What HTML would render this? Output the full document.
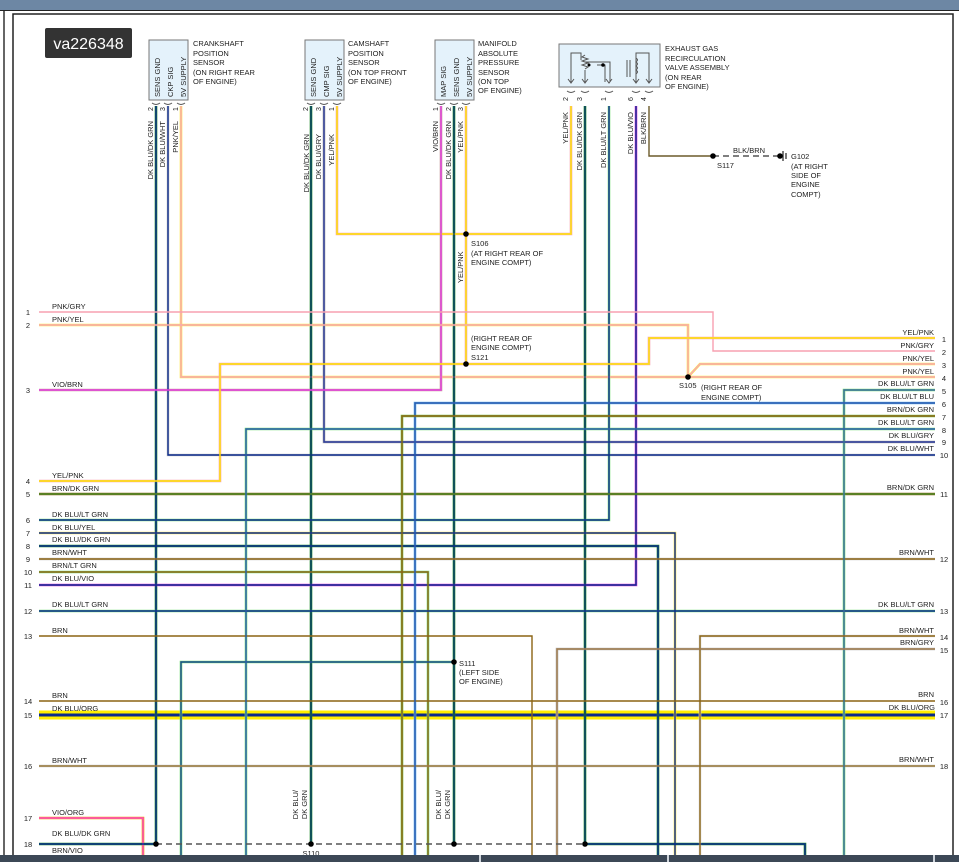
<!DOCTYPE html>
<html><head><meta charset="utf-8"><style>
html,body{margin:0;padding:0;background:#fff;}
svg{display:block;font-family:"Liberation Sans",sans-serif;}
text{fill:#222;}
</style></head><body>
<svg width="959" height="862" viewBox="0 0 959 862" xmlns="http://www.w3.org/2000/svg">
<rect width="959" height="862" fill="#fff"/>
<rect x="0" y="0" width="959" height="10" fill="#6d87a4"/>
<line x1="0" y1="10.5" x2="959" y2="10.5" stroke="#222" stroke-width="1"/>
<line x1="4" y1="11" x2="4" y2="862" stroke="#333" stroke-width="1.5"/>
<rect x="13" y="14" width="940" height="850" fill="none" stroke="#222" stroke-width="1.5"/>

<rect x="45" y="28" width="87" height="30" rx="2" fill="#333"/>
<text x="88.5" y="49" font-size="16" text-anchor="middle" style="fill:#fff">va226348</text>

<g fill="none" stroke-linejoin="miter">
<path d="M39 715H935" stroke="#ffee00" stroke-width="9"/>
<path d="M39 715H935" stroke="#0a2a8c" stroke-width="3"/>

<g stroke-width="2.6">
<path d="M156 106V844" stroke="#1e8a2a"/>
<path d="M168 106V455H935" stroke="#ccc"/>
<path d="M181 106V377H688" stroke="#ffe94a"/>
<path d="M311 106V844" stroke="#1e8a2a"/>
<path d="M324 106V442H935" stroke="#aaa"/>
<path d="M337 106V234H571V106M466 106V364" stroke="#f7a6b3"/>
<path d="M441 106V390H39" stroke="#c9a0a0"/>
<path d="M454 106V844" stroke="#1e8a2a"/>
<path d="M585 106V844" stroke="#1e8a2a"/>
<path d="M609 106V520H39" stroke="#7de07d"/>
<path d="M636 106V585H39" stroke="#e040e0"/>
<path d="M39 325H688V377H935M688 377L700 364H935" stroke="#ffe94a"/>
<path d="M39 481H220V364H649V338H935" stroke="#f7a6b3"/>
<path d="M39 494H935" stroke="#8b6414"/>
<path d="M39 533H675V856" stroke="#ffe94a"/>
<path d="M39 546H658V856" stroke="#1e8a2a"/>
<path d="M39 559H935" stroke="#ccc"/>
<path d="M39 572H428V856" stroke="#7de07d"/>
<path d="M39 611H935" stroke="#7de07d"/>
<path d="M181 856V662H454" stroke="#7de07d"/>
<path d="M39 766H935" stroke="#ccc"/>
<path d="M39 818H143V856" stroke="#f0a000"/>
<path d="M39 844H156M585 844H805V856" stroke="#1e8a2a"/>
<path d="M935 390H844V856" stroke="#7de07d"/>
<path d="M935 403H415V856" stroke="#6ab4f0"/>
<path d="M935 416H402V856" stroke="#7ac04a"/>
<path d="M935 429H246V856" stroke="#7de07d"/>
<path d="M935 636H700V856" stroke="#ddd"/>
<path d="M935 649H557V856" stroke="#bbb"/>
</g>
<g stroke-width="1.4">
<path d="M156 106V844" stroke="#0a2a8c"/>
<path d="M168 106V455H935" stroke="#0a2a8c"/>
<path d="M181 106V377H688" stroke="#f7a6b3"/>
<path d="M311 106V844" stroke="#0a3a6c"/>
<path d="M324 106V442H935" stroke="#2a3a9c"/>
<path d="M337 106V234H571V106M466 106V364" stroke="#ffe600"/>
<path d="M441 106V390H39" stroke="#e53be0"/>
<path d="M454 106V844" stroke="#0a3a6c"/>
<path d="M585 106V844" stroke="#0a3a6c"/>
<path d="M609 106V520H39" stroke="#0a2a8c"/>
<path d="M636 106V585H39" stroke="#0a2a8c"/>
<path d="M649 106V156H713" stroke="#6b5a2a"/>
<path d="M39 312H713V351H935" stroke="#f7a0b0"/>
<path d="M39 325H688V377H935M688 377L700 364H935" stroke="#f7a6b3"/>
<path d="M39 481H220V364H649V338H935" stroke="#ffe600"/>
<path d="M39 494H935" stroke="#4a8a2a"/>
<path d="M39 533H675V856" stroke="#0a2a8c"/>
<path d="M39 546H658V856" stroke="#0a2a8c"/>
<path d="M39 559H935" stroke="#8b6414"/>
<path d="M39 572H428V856" stroke="#8b6414"/>
<path d="M39 611H935" stroke="#0a2a8c"/>
<path d="M39 636H532V856" stroke="#8b6414"/>
<path d="M181 856V662H454" stroke="#1a4a8c"/>
<path d="M39 701H935" stroke="#8b6414"/>
<path d="M39 766H935" stroke="#9a7a3a"/>
<path d="M39 818H143V856" stroke="#ff44cc"/>
<path d="M39 844H156M585 844H805V856" stroke="#0a2a8c"/>
<path d="M935 390H844V856" stroke="#3a6a9c"/>
<path d="M935 403H415V856" stroke="#2a5aac"/>
<path d="M935 416H402V856" stroke="#8b6414"/>
<path d="M935 429H246V856" stroke="#2a5aac"/>
<path d="M935 636H700V856" stroke="#8b6414"/>
<path d="M935 649H557V856" stroke="#a07a4a"/>
</g>
<path d="M156 844H585" stroke="#555" stroke-width="1.5" stroke-dasharray="6 4"/>
<path d="M713 156H780" stroke="#555" stroke-width="1.5" stroke-dasharray="6 4"/>
</g>

<g fill="#000">
<circle cx="466" cy="234" r="2.8"/><circle cx="466" cy="364" r="2.8"/>
<circle cx="688" cy="377" r="2.8"/><circle cx="454" cy="662" r="2.8"/>
<circle cx="713" cy="156" r="2.8"/><circle cx="780" cy="156" r="2.8"/>
<circle cx="156" cy="844" r="2.8"/><circle cx="311" cy="844" r="2.8"/>
<circle cx="454" cy="844" r="2.8"/><circle cx="585" cy="844" r="2.8"/>
</g>
<path d="M783 151V161M786 153V159" stroke="#222" stroke-width="1.2"/>

<g fill="#e4f2fb" stroke="#777" stroke-width="1">
<rect x="149" y="40" width="39" height="60"/>
<rect x="305" y="40" width="39" height="60"/>
<rect x="435" y="40" width="39" height="60"/>
<rect x="559" y="44" width="101" height="43"/>
</g>
<g stroke="#555" stroke-width="1" fill="none">
<path d="M152 103q4 3 8 0M164 103q4 3 8 0M177 103q4 3 8 0"/>
<path d="M307 103q4 3 8 0M320 103q4 3 8 0M333 103q4 3 8 0"/>
<path d="M437 103q4 3 8 0M450 103q4 3 8 0M462 103q4 3 8 0"/>
<path d="M567 91q4 3 8 0M581 91q4 3 8 0M605 91q4 3 8 0M632 91q4 3 8 0M645 91q4 3 8 0"/>
<path d="M571 82V53H581V60M585 82V70M605 82V65H597M636 82V53H649V82"/>
<path d="M585 55l-3 2 6 2-6 2 6 2-6 2 6 2-3 2M585 62H610V82"/>
<path d="M627 60V77M630 60V77M636 58q3 2 0 4q3 2 0 4q3 2 0 4q3 2 0 4"/>
<path d="M568 79l3 4 3-4M582 79l3 4 3-4M606 79l3 4 3-4M633 79l3 4 3-4M646 79l3 4 3-4"/>
</g>
<circle cx="603" cy="65" r="1.8" fill="#000"/><circle cx="589" cy="65" r="1.5" fill="#000"/>

<g font-size="7.5">
<g text-anchor="start">
<text transform="translate(160,97) rotate(-90)">SENS GND</text>
<text transform="translate(173,97) rotate(-90)">CKP SIG</text>
<text transform="translate(186,97) rotate(-90)">5V SUPPLY</text>
<text transform="translate(316,97) rotate(-90)">SENS GND</text>
<text transform="translate(329,97) rotate(-90)">CMP SIG</text>
<text transform="translate(342,97) rotate(-90)">5V SUPPLY</text>
<text transform="translate(446,97) rotate(-90)">MAP SIG</text>
<text transform="translate(459,97) rotate(-90)">SENS GND</text>
<text transform="translate(472,97) rotate(-90)">5V SUPPLY</text>
</g>
<g font-size="7">
<text transform="translate(153,111) rotate(-90)">2</text><text transform="translate(165,111) rotate(-90)">3</text><text transform="translate(178,111) rotate(-90)">1</text>
<text transform="translate(308,111) rotate(-90)">2</text><text transform="translate(321,111) rotate(-90)">3</text><text transform="translate(334,111) rotate(-90)">1</text>
<text transform="translate(438,111) rotate(-90)">1</text><text transform="translate(451,111) rotate(-90)">2</text><text transform="translate(463,111) rotate(-90)">3</text>
<text transform="translate(568,101) rotate(-90)">2</text><text transform="translate(582,101) rotate(-90)">3</text><text transform="translate(606,101) rotate(-90)">1</text><text transform="translate(633,101) rotate(-90)">6</text><text transform="translate(646,101) rotate(-90)">4</text>
</g>
<g text-anchor="end">
<text transform="translate(153,121) rotate(-90)">DK BLU/DK GRN</text>
<text transform="translate(165,121) rotate(-90)">DK BLU/WHT</text>
<text transform="translate(178,121) rotate(-90)">PNK/YEL</text>
<text transform="translate(309,134) rotate(-90)">DK BLU/DK GRN</text>
<text transform="translate(321,134) rotate(-90)">DK BLU/GRY</text>
<text transform="translate(334,134) rotate(-90)">YEL/PNK</text>
<text transform="translate(438,121) rotate(-90)">VIO/BRN</text>
<text transform="translate(451,121) rotate(-90)">DK BLU/DK GRN</text>
<text transform="translate(463,121) rotate(-90)">YEL/PNK</text>
<text transform="translate(568,112) rotate(-90)">YEL/PNK</text>
<text transform="translate(582,112) rotate(-90)">DK BLU/DK GRN</text>
<text transform="translate(606,112) rotate(-90)">DK BLU/LT GRN</text>
<text transform="translate(633,112) rotate(-90)">DK BLU/VIO</text>
<text transform="translate(646,112) rotate(-90)">BLK/BRN</text>
<text transform="translate(298,790) rotate(-90)">DK BLU/</text>
<text transform="translate(307,790) rotate(-90)">DK GRN</text>
<text transform="translate(441,790) rotate(-90)">DK BLU/</text>
<text transform="translate(450,790) rotate(-90)">DK GRN</text>
</g>
<text transform="translate(463,283) rotate(-90)">YEL/PNK</text>

<g>
<text x="193" y="46">CRANKSHAFT</text><text x="193" y="56">POSITION</text><text x="193" y="65">SENSOR</text><text x="193" y="75">(ON RIGHT REAR</text><text x="193" y="84">OF ENGINE)</text>
<text x="348" y="46">CAMSHAFT</text><text x="348" y="56">POSITION</text><text x="348" y="65">SENSOR</text><text x="348" y="75">(ON TOP FRONT</text><text x="348" y="84">OF ENGINE)</text>
<text x="478" y="46">MANIFOLD</text><text x="478" y="56">ABSOLUTE</text><text x="478" y="65">PRESSURE</text><text x="478" y="75">SENSOR</text><text x="478" y="84">(ON TOP</text><text x="478" y="93">OF ENGINE)</text>
<text x="665" y="51">EXHAUST GAS</text><text x="665" y="61">RECIRCULATION</text><text x="665" y="70">VALVE ASSEMBLY</text><text x="665" y="80">(ON REAR</text><text x="665" y="89">OF ENGINE)</text>
<text x="733" y="153">BLK/BRN</text><text x="717" y="168">S117</text>
<text x="791" y="159">G102</text><text x="791" y="169">(AT RIGHT</text><text x="791" y="178">SIDE OF</text><text x="791" y="187">ENGINE</text><text x="791" y="197">COMPT)</text>
<text x="471" y="246">S106</text><text x="471" y="256">(AT RIGHT REAR OF</text><text x="471" y="265">ENGINE COMPT)</text>
<text x="471" y="341">(RIGHT REAR OF</text><text x="471" y="350">ENGINE COMPT)</text><text x="471" y="360">S121</text>
<text x="679" y="388">S105</text><text x="701" y="390">(RIGHT REAR OF</text><text x="701" y="400">ENGINE COMPT)</text>
<text x="459" y="666">S111</text><text x="459" y="675">(LEFT SIDE</text><text x="459" y="684">OF ENGINE)</text>
<text x="311" y="856" text-anchor="middle">S110</text>
</g>

<g>
<text x="52" y="309">PNK/GRY</text><text x="52" y="322">PNK/YEL</text><text x="52" y="387">VIO/BRN</text>
<text x="52" y="478">YEL/PNK</text><text x="52" y="491">BRN/DK GRN</text><text x="52" y="517">DK BLU/LT GRN</text>
<text x="52" y="530">DK BLU/YEL</text><text x="52" y="542">DK BLU/DK GRN</text><text x="52" y="555">BRN/WHT</text>
<text x="52" y="568">BRN/LT GRN</text><text x="52" y="581">DK BLU/VIO</text><text x="52" y="607">DK BLU/LT GRN</text>
<text x="52" y="633">BRN</text><text x="52" y="698">BRN</text><text x="52" y="711">DK BLU/ORG</text>
<text x="52" y="763">BRN/WHT</text><text x="52" y="815">VIO/ORG</text><text x="52" y="836">DK BLU/DK GRN</text><text x="52" y="853">BRN/VIO</text>
</g>
<g text-anchor="middle">
<text x="28" y="315">1</text><text x="28" y="328">2</text><text x="28" y="393">3</text><text x="28" y="484">4</text><text x="28" y="497">5</text>
<text x="28" y="523">6</text><text x="28" y="536">7</text><text x="28" y="549">8</text><text x="28" y="562">9</text><text x="28" y="575">10</text>
<text x="28" y="588">11</text><text x="28" y="614">12</text><text x="28" y="639">13</text><text x="28" y="704">14</text><text x="28" y="718">15</text>
<text x="28" y="769">16</text><text x="28" y="821">17</text><text x="28" y="847">18</text>
</g>
<g text-anchor="end">
<text x="934" y="335">YEL/PNK</text><text x="934" y="348">PNK/GRY</text><text x="934" y="361">PNK/YEL</text><text x="934" y="374">PNK/YEL</text>
<text x="934" y="386">DK BLU/LT GRN</text><text x="934" y="399">DK BLU/LT BLU</text><text x="934" y="412">BRN/DK GRN</text>
<text x="934" y="425">DK BLU/LT GRN</text><text x="934" y="438">DK BLU/GRY</text><text x="934" y="451">DK BLU/WHT</text>
<text x="934" y="490">BRN/DK GRN</text><text x="934" y="555">BRN/WHT</text><text x="934" y="607">DK BLU/LT GRN</text>
<text x="934" y="633">BRN/WHT</text><text x="934" y="645">BRN/GRY</text><text x="934" y="697">BRN</text>
<text x="935" y="710">DK BLU/ORG</text><text x="934" y="762">BRN/WHT</text>
</g>
<g text-anchor="middle">
<text x="944" y="342">1</text><text x="944" y="355">2</text><text x="944" y="368">3</text><text x="944" y="381">4</text>
<text x="944" y="394">5</text><text x="944" y="407">6</text><text x="944" y="420">7</text><text x="944" y="433">8</text>
<text x="944" y="445">9</text><text x="944" y="458">10</text><text x="944" y="497">11</text><text x="944" y="562">12</text>
<text x="944" y="614">13</text><text x="944" y="640">14</text><text x="944" y="653">15</text><text x="944" y="705">16</text>
<text x="944" y="718">17</text><text x="944" y="769">18</text>
</g>
</g>

<rect x="0" y="855" width="959" height="7" fill="#3c4856"/>
<rect x="479" y="855" width="2" height="7" fill="#cfd5dc"/>
<rect x="667" y="855" width="2" height="7" fill="#cfd5dc"/>
<rect x="933" y="855" width="2" height="7" fill="#cfd5dc"/>
</svg>
</body></html>
